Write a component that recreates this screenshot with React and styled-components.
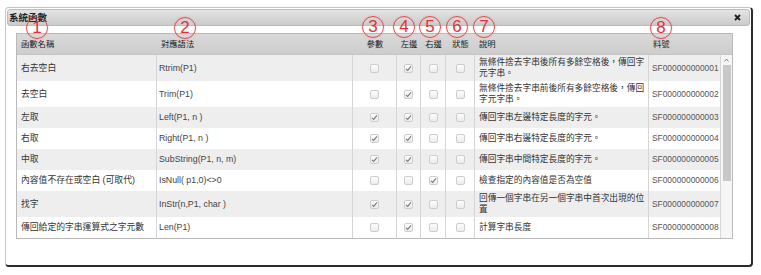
import React from "react";
import styled, { createGlobalStyle } from "styled-components";

const Global = createGlobalStyle`
  html, body { margin: 0; padding: 0; background: #fff; }
  body { font-family: "Liberation Sans", "Noto Sans CJK TC", sans-serif; }
`;

const COLS = "140px 196px 44px 24px 25px 29px 174px 72px";

const Page = styled.div`
  position: relative;
  width: 761px;
  height: 275px;
  padding: 7px 0 0 5px;
  box-sizing: border-box;
`;

const Window = styled.div`
  width: 748px;
  height: 260px;
  box-sizing: border-box;
  border: 1px solid #c4c4c4;
  border-right: 2px solid #2b2b2b;
  border-bottom: 2px solid #2b2b2b;
  border-radius: 4px;
  background: #fff;
  display: flex;
  flex-direction: column;
`;

const TitleBar = styled.div`
  margin: 1px 1px 0;
  height: 17px;
  box-sizing: border-box;
  border: 1px solid #bcbcbc;
  border-radius: 3px;
  background: linear-gradient(#e4e4e4, #cbcbcb);
  display: flex;
  align-items: center;
  justify-content: space-between;
  padding: 0 8px 0 1px;
`;

const Title = styled.span`
  font-family: "Noto Sans CJK TC", sans-serif;
  font-size: 9.5px;
  font-weight: 700;
  color: #222;
  line-height: 1;
`;

const Content = styled.div`
  padding: 7px 0 0 10px;
`;

const Table = styled.div`
  width: 717px;
  box-sizing: border-box;
  border: 1px solid #bababa;
  font-size: 8.8px;
  color: #333;
`;

const HeaderRow = styled.div`
  display: grid;
  grid-template-columns: ${COLS} 11px;
  height: 21px;
  align-items: end;
  padding-bottom: 4px;
  box-sizing: border-box;
  background: linear-gradient(#d9d9d9, #cdcdcd);
  border-bottom: 1px solid #c4c4c4;
`;

const HeadCell = styled.div`
  font-size: 8.3px;
  color: #222;
  line-height: 11px;
  padding: ${(p) => (p.$center ? "0" : "0 4px")};
  text-align: ${(p) => (p.$center ? "center" : "left")};
  white-space: nowrap;
`;

const Body = styled.div`
  display: flex;
`;

const Rows = styled.div`
  flex: 1;
  display: flex;
  flex-direction: column;
`;

const Row = styled.div`
  display: grid;
  grid-template-columns: ${COLS};
  min-height: 21px;
  background: ${(p) => (p.$alt ? "#eeeeee" : "#ffffff")};
`;

const Cell = styled.div`
  display: flex;
  align-items: center;
  justify-content: ${(p) => (p.$center ? "center" : "flex-start")};
  padding: ${(p) => (p.$center ? "0" : p.$pad || "2px 2px 2px 4px")};
  border-right: 1px solid #d6d6d6;
  line-height: 11px;
  font-size: ${(p) => p.$size || "8.8px"};
  color: ${(p) => p.$color || "#333"};
  white-space: pre;
  overflow: hidden;
  box-sizing: border-box;
`;

const Box = styled.span`
  width: 9px;
  height: 9px;
  box-sizing: border-box;
  border: 1px solid #cdcdcd;
  border-radius: 2px;
  background: linear-gradient(#fdfdfd, #ececec);
  display: flex;
  align-items: center;
  justify-content: center;
`;

const Track = styled.div`
  width: 11px;
  background: #f6f6f6;
  display: flex;
  flex-direction: column;
  align-items: center;
  padding-top: 3px;
  box-sizing: border-box;
`;

const Thumb = styled.div`
  width: 8px;
  height: 116px;
  margin-top: 3px;
  background: #c8c8c8;
`;

const Mark = styled.span`
  position: absolute;
  left: ${(p) => p.$x - 11}px;
  top: ${(p) => p.$y - 11}px;
  width: 22px;
  height: 22px;
  box-sizing: border-box;
  border: 1.5px solid rgba(228, 50, 58, 0.85);
  border-radius: 50%;
  box-shadow: 0 0 2px rgba(255, 130, 130, 0.5);
  color: #e4323a;
  font-family: "Liberation Sans", sans-serif;
  font-size: 17px;
  line-height: 19px;
  text-align: center;
`;

const Check = ({ on }) => (
  <Box>
    {on && (
      <svg width="7" height="7" viewBox="0 0 7 7">
        <path d="M1 3.8 L2.7 5.4 L6 1.4" fill="none" stroke="#7a7a7a" strokeWidth="1.1" />
      </svg>
    )}
  </Box>
);

const Close = () => (
  <svg width="7" height="7" viewBox="0 0 7 7">
    <path d="M1 1 L6 6 M6 1 L1 6" stroke="#1e1e1e" strokeWidth="1.8" />
  </svg>
);

const rows = [
  ["右去空白", "Rtrim(P1)", [0, 1, 0, 0], "無條件捨去字串後所有多餘空格後，傳回字\n元字串。", "SF000000000001"],
  ["去空白", "Trim(P1)", [0, 1, 0, 0], "無條件捨去字串前後所有多餘空格後，傳回\n字元字串。", "SF000000000002"],
  ["左取", "Left(P1, n )", [1, 1, 0, 0], "傳回字串左邊特定長度的字元。", "SF000000000003"],
  ["右取", "Right(P1, n )", [1, 1, 0, 0], "傳回字串右邊特定長度的字元。", "SF000000000004"],
  ["中取", "SubString(P1, n, m)", [1, 1, 0, 0], "傳回字串中間特定長度的字元。", "SF000000000005"],
  ["內容值不存在或空白 (可取代)", "IsNull( p1,0)<>0", [0, 0, 1, 0], "檢查指定的內容值是否為空值", "SF000000000006"],
  ["找字", "InStr(n,P1, char )", [1, 1, 0, 0], "回傳一個字串在另一個字串中首次出現的位\n置", "SF000000000007"],
  ["傳回給定的字串運算式之字元數", "Len(P1)", [0, 1, 0, 0], "計算字串長度", "SF000000000008"],
];

const marks = [
  ["1", 37, 28],
  ["2", 185, 28],
  ["3", 373, 27],
  ["4", 404, 27],
  ["5", 430, 27],
  ["6", 457, 27],
  ["7", 484, 27],
  ["8", 661, 28],
];

export default function App() {
  return (
    <Page>
      <Global />
      <Window>
        <TitleBar>
          <Title>系統函數</Title>
          <Close />
        </TitleBar>
        <Content>
          <Table>
            <HeaderRow>
              <HeadCell>函數名稱</HeadCell>
              <HeadCell>對應語法</HeadCell>
              <HeadCell $center>參數</HeadCell>
              <HeadCell $center>左邊</HeadCell>
              <HeadCell $center>右邊</HeadCell>
              <HeadCell $center>狀態</HeadCell>
              <HeadCell>說明</HeadCell>
              <HeadCell>料號</HeadCell>
              <HeadCell />
            </HeaderRow>
            <Body>
              <Rows>
                {rows.map(([name, syn, checks, desc, code], i) => (
                  <Row key={code} $alt={i % 2 === 0}>
                    <Cell>{name}</Cell>
                    <Cell $color="#444" $pad="2px 2px">{syn}</Cell>
                    {checks.map((c, j) => (
                      <Cell key={j} $center>
                        <Check on={!!c} />
                      </Cell>
                    ))}
                    <Cell $pad="2px 0 2px 4px" $size="8.7px">{desc}</Cell>
                    <Cell $color="#555" $pad="2px 0 2px 3px" $size="8.4px">{code}</Cell>
                  </Row>
                ))}
              </Rows>
              <Track>
                <svg width="5" height="4" viewBox="0 0 5 4">
                  <path d="M0.5 3.5 L2.5 1 L4.5 3.5" fill="none" stroke="#888" strokeWidth="1" />
                </svg>
                <Thumb />
              </Track>
            </Body>
          </Table>
        </Content>
      </Window>
      {marks.map(([n, x, y]) => (
        <Mark key={n} $x={x} $y={y}>
          {n}
        </Mark>
      ))}
    </Page>
  );
}
